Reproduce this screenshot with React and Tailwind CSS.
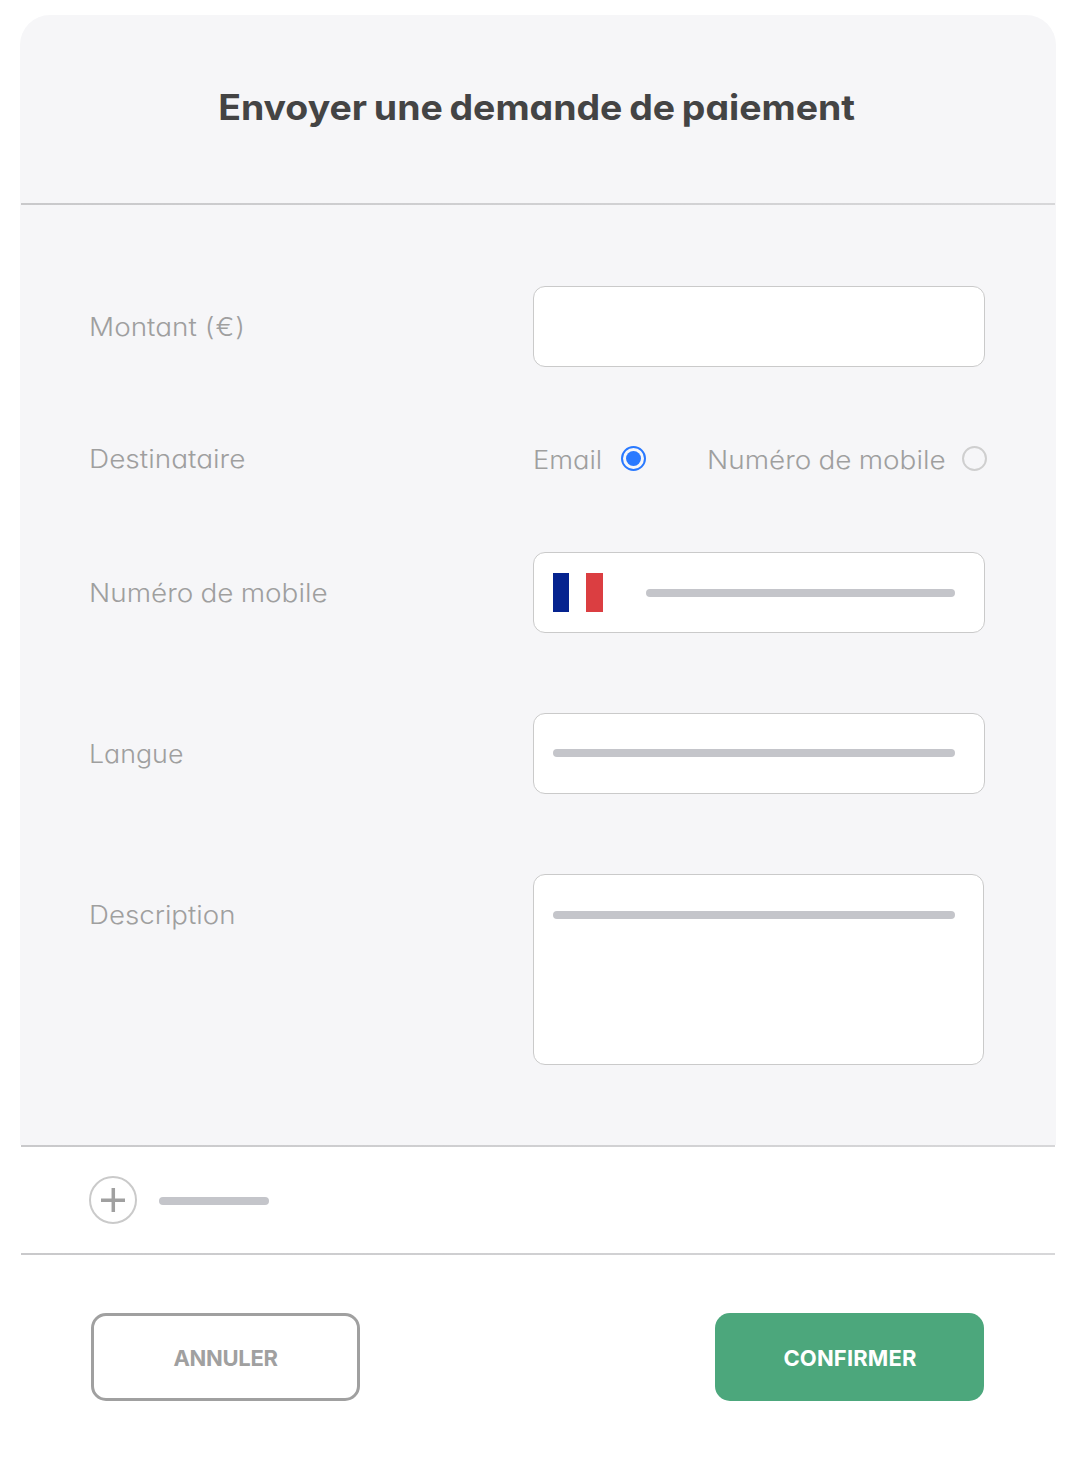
import { useState } from "react";
import clsx from "clsx";

function Divider() {
  return (
    <div className="mx-px h-0.5 bg-linear-to-r from-[#c9c9cb] to-[#d7d7d9]" />
  );
}

function Bar({ className }) {
  return <div className={clsx("h-2 rounded-full bg-[#c4c5ca]", className)} />;
}

function Row({ label, labelClass, className, children }) {
  return (
    <div className={clsx("flex items-start", className)}>
      <div className="flex h-[81px] w-[444px] shrink-0 items-center">
        <span className={clsx("origin-left whitespace-nowrap", labelClass)}>
          {label}
        </span>
      </div>
      {children}
    </div>
  );
}

function Field({ className, children }) {
  return (
    <div
      className={clsx(
        "flex rounded-xl border border-[#cacaca] bg-white pl-[19px]",
        className
      )}
    >
      {children}
    </div>
  );
}

function Radio({ checked, onClick, label }) {
  return (
    <button
      type="button"
      role="radio"
      aria-checked={checked}
      aria-label={label}
      onClick={onClick}
      className={clsx(
        "mb-0.5 flex size-[25px] shrink-0 items-center justify-center rounded-full border-2",
        checked ? "border-[#2979ff]" : "border-[#cfcfcf]"
      )}
    >
      {checked && <span className="size-[15px] rounded-full bg-[#2979ff]" />}
    </button>
  );
}

function FrenchFlag() {
  return (
    <div className="flex h-[39px] w-[50px]">
      <div className="w-4 bg-[#05238f]" />
      <div className="w-[17px] bg-white" />
      <div className="w-[17px] bg-[#db3e41]" />
    </div>
  );
}

function App() {
  const [target, setTarget] = useState("email");

  return (
    <div className="min-h-[1484px] w-[1078px] bg-white px-5 pt-[15px] pr-[22px] font-['Inter',sans-serif] [font-feature-settings:'cv11']">
      <div className="rounded-t-[30px] bg-[#f6f6f8]">
        <div className="flex h-[188px] items-center justify-center pr-[3px] pb-1">
          <h1 className="scale-x-[1.07] text-[35px] leading-10 font-bold whitespace-nowrap text-[#444444] [word-spacing:-2px]">
            Envoyer une demande de paiement
          </h1>
        </div>

        <Divider />

        <div className="pt-[81px] pb-20 pl-[69px] text-[25.5px] leading-8 font-light text-[#9f9f9f]">
          <Row
            label={
              <>
                Montant <span className="tracking-[1px]">(€)</span>
              </>
            }
            labelClass="scale-x-[1.095]"
          >
            <Field className="h-[81px] w-[452px]" />
          </Row>

          <Row
            label="Destinataire"
            labelClass="mb-0.5 scale-x-[1.098]"
            className="my-[52px]"
          >
            <div className="flex h-[81px] items-center">
              <span className="w-[88px] origin-left scale-x-[1.07]">Email</span>
              <Radio
                label="Email"
                checked={target === "email"}
                onClick={() => setTarget("email")}
              />
              <span className="ml-[61px] w-[255px] origin-left scale-x-[1.095] whitespace-nowrap [word-spacing:-0.6px]">
                Numéro de mobile
              </span>
              <Radio
                label="Numéro de mobile"
                checked={target === "mobile"}
                onClick={() => setTarget("mobile")}
              />
            </div>
          </Row>

          <Row
            label="Numéro de mobile"
            labelClass="scale-x-[1.095] [word-spacing:-0.6px]"
            className="mb-20"
          >
            <Field className="h-[81px] w-[452px] items-center">
              <FrenchFlag />
              <Bar className="ml-[43px] w-[309px]" />
            </Field>
          </Row>

          <Row label="Langue" labelClass="scale-x-[1.05]" className="mb-20">
            <Field className="h-[81px] w-[452px] items-center">
              <Bar className="mb-0.5 w-[402px]" />
            </Field>
          </Row>

          <Row label="Description" labelClass="scale-x-[1.085]">
            <Field className="h-[191px] w-[451px] pt-9">
              <Bar className="w-[402px]" />
            </Field>
          </Row>
        </div>
      </div>

      <Divider />

      <div className="flex h-[106px] items-center pl-[69px]">
        <button
          type="button"
          aria-label="Ajouter"
          className="flex size-12 items-center justify-center rounded-full border-2 border-[#cacaca]"
        >
          <svg width="24" height="24" viewBox="0 0 24 24" fill="none">
            <path d="M12.3 0V24M0 12.2H24" stroke="#a0a0a0" strokeWidth="3.5" />
          </svg>
        </button>
        <Bar className="mt-0.5 ml-[22px] w-[110px]" />
      </div>

      <Divider />

      <div className="flex justify-between pt-[58px] pr-[72px] pl-[71px] text-[22px] font-bold">
        <button
          type="button"
          className="h-[88px] w-[269px] rounded-[15px] border-3 border-[#a0a0a0] pt-0.5 tracking-[-0.3px] text-[#a0a0a0]"
        >
          ANNULER
        </button>
        <button
          type="button"
          className="h-[88px] w-[269px] rounded-[15px] bg-[#4ca77c] pt-0.5 pl-px tracking-[0.15px] text-white"
        >
          CONFIRMER
        </button>
      </div>
    </div>
  );
}

export default App;
